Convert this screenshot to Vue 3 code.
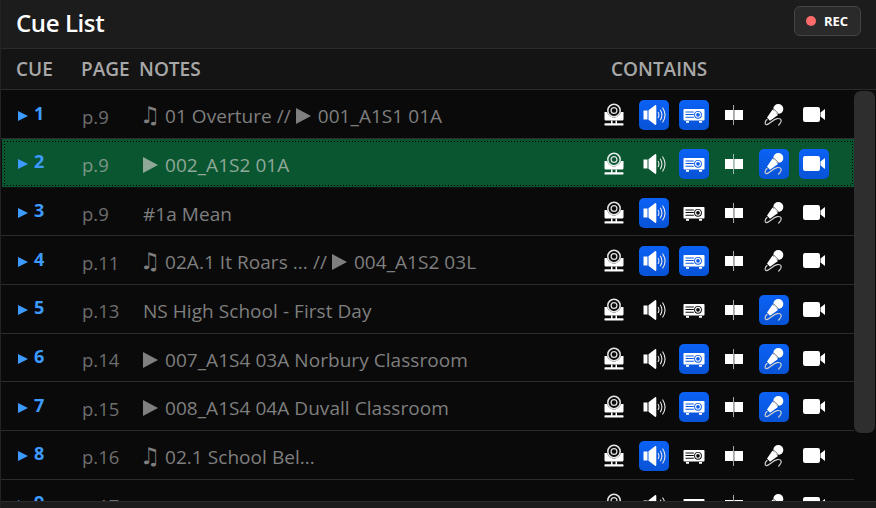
<script setup>
const cues = [
  { id: 1, page: 'p.9', parts: [['♫', '01 Overture // '], ['▶', '001_A1S1 01A']], on: ['speaker', 'projector'] },
  { id: 2, page: 'p.9', parts: [['▶', '002_A1S2 01A']], on: ['projector', 'mic', 'video'], selected: true },
  { id: 3, page: 'p.9', parts: [['', '#1a Mean']], on: ['speaker'] },
  { id: 4, page: 'p.11', parts: [['♫', '02A.1 It Roars ... // '], ['▶', '004_A1S2 03L']], on: ['speaker', 'projector'] },
  { id: 5, page: 'p.13', parts: [['', 'NS High School - First Day']], on: ['mic'] },
  { id: 6, page: 'p.14', parts: [['▶', '007_A1S4 03A Norbury Classroom']], on: ['projector', 'mic'] },
  { id: 7, page: 'p.15', parts: [['▶', '008_A1S4 04A Duvall Classroom']], on: ['projector', 'mic'] },
  { id: 8, page: 'p.16', parts: [['♫', '02.1 School Bel...']], on: ['speaker'] },
  { id: 9, page: 'p.17', parts: [['', '']], on: [] },
]
const icons = ['camera', 'speaker', 'projector', 'split', 'mic', 'video']
</script>

<template>
  <div class="panel">
    <svg class="defs" width="0" height="0">
      <symbol id="camera" viewBox="0 0 24 24">
        <circle cx="12" cy="7.500" r="6.200" fill="none" stroke="#fff" stroke-width="1.500" opacity=".9" />
        <circle cx="12" cy="7.500" r="2.900" fill="none" stroke="#ddd" stroke-width="1.300" />
        <path fill="#fff" d="M2.500 9h2.700c.8 3.200 3.600 5.500 6.800 5.500s6-2.300 6.800-5.500h2.700v7c0 .9-.7 1.600-1.600 1.600H4.100c-.9 0-1.600-.7-1.600-1.600z" />
        <path fill="#fff" d="M9 17.600h1.500v2.700H9zM13.500 17.600H15v2.700h-1.500zM3.300 20.300h17.400c.6 0 .9.400.9 1s-.3 1.300-.9 1.300H3.300c-.6 0-.9-.7-.9-1.300s.3-1 .9-1z" />
      </symbol>
      <symbol id="speaker" viewBox="0 0 24 24">
        <path fill="#fff" d="M1.500 7.500h4v9h-4zM6.500 7.300 13 2.300c.7-.5 1.300-.2 1.300.6v18.200c0 .8-.6 1.100-1.300.6l-6.500-5z" />
        <path fill="none" stroke="#e6e6e6" stroke-width="1.100" d="M16 9c1.200 1.900 1.200 4.100 0 6M18.200 6.800c2.200 3.300 2.200 7.100 0 10.400M20.500 4.500c3.200 4.700 3.200 10.300 0 15" />
      </symbol>
      <symbol id="projector" viewBox="0 0 24 24">
        <path fill="#fff" fill-rule="evenodd" d="M2.500 6h19c.6 0 1 .4 1 1v9.500c0 .6-.4 1-1 1h-19c-.6 0-1-.4-1-1V7c0-.6.4-1 1-1zm13.500 1.900a3.900 3.900 0 1 0 0 7.800 3.900 3.900 0 0 0 0-7.800zM3.500 8.500v1h8.300v-1zm0 2.600v1h8.300v-1zm0 2.600v1h8.300v-1z" />
        <circle cx="16" cy="11.800" r="2.400" fill="none" stroke="#fff" stroke-width="1.100" />
        <path fill="#fff" d="M4 18h3v1.700H4zM17 18h3v1.700h-3z" />
      </symbol>
      <symbol id="split" viewBox="0 0 24 24">
        <path fill="#fff" d="M3 7h8v10H3zM12.300 7H21v10h-8.700z" />
        <path fill="#d0d0d0" d="M11.200 2h.8v20h-.8z" />
      </symbol>
      <symbol id="mic" viewBox="0 0 24 24">
        <circle cx="16.300" cy="6" r="5" fill="#fff" />
        <path fill="#fff" d="M10.500 6.400 16 12 8 17.800 5 14.600z" />
        <path fill="none" stroke="#111" stroke-opacity=".6" stroke-width="1" d="M11.500 5.800 17 11.300" />
        <path fill="none" stroke="#cfcfcf" stroke-width="1.200" stroke-linecap="round" d="M5 16.500c-2 1.800-2.600 4.600-.8 5.100 3 .6 6.500-5.300 11-6 4-.6 5.800 2 1.500 6.400" />
      </symbol>
      <symbol id="video" viewBox="0 0 24 24">
        <rect x="1" y="4" width="17" height="15" rx="2.200" fill="#fff" />
        <path fill="#fff" d="M18.500 9.500 23 6v11l-4.500-3.500z" />
      </symbol>
    </svg>

    <header class="top-bar">
      <h1>Cue List</h1>
      <button class="rec-btn"><span class="rec-dot"></span>REC</button>
    </header>

    <div class="col-heads">
      <span class="h-cue">CUE</span>
      <span class="h-page">PAGE</span>
      <span class="h-notes">NOTES</span>
      <span class="h-contains">CONTAINS</span>
    </div>

    <div class="list-wrap">
      <div class="rows">
        <div v-for="cue in cues" :key="cue.id" class="row" :class="{ selected: cue.selected }">
          <div class="cue-cell"><span class="arrow"></span><span class="num">{{ cue.id }}</span></div>
          <div class="page-cell">{{ cue.page }}</div>
          <div class="notes-cell">
            <template v-for="(p, i) in cue.parts" :key="i">
              <span v-if="p[0] === '♫'" class="note-glyph">♫</span>
              <span v-else-if="p[0]" class="play-glyph"></span>
              <span class="note-text">{{ p[1] }}</span>
            </template>
          </div>
          <div class="icon-cell">
            <span v-for="ic in icons" :key="ic" class="ico" :class="{ on: cue.on.includes(ic) }">
              <svg :class="ic"><use :href="'#' + ic" /></svg>
            </span>
          </div>
        </div>
      </div>
      <div class="scroll-track"><div class="scroll-thumb"></div></div>
    </div>

    <div class="foot"></div>
  </div>
</template>

<style>
html, body { margin: 0; background: #0a0a0a; overflow: hidden; }
</style>

<style scoped>
.panel {
  width: 876px;
  height: 508px;
  display: flex;
  flex-direction: column;
  background: #0a0a0a;
  font-family: "Open Sans", "Noto Sans", "DejaVu Sans", sans-serif;
  overflow: hidden;
  box-sizing: border-box;
  border-left: 1px solid #222;
}
.defs { position: absolute; }

.top-bar {
  height: 49px;
  flex: none;
  box-sizing: border-box;
  background: #1c1c1c;
  border-bottom: 1px solid #2b2b2b;
  display: flex;
  align-items: center;
  justify-content: space-between;
  padding: 0 15px 6px 15px;
}
.top-bar h1 {
  margin: 3px 0 0;
  font-size: 24px;
  font-weight: 600;
  letter-spacing: -0.4px;
  color: #fff;
}
.rec-btn {
  width: 67px;
  height: 30px;
  box-sizing: border-box;
  background: #2a2a2a;
  border: 1px solid #444;
  border-radius: 6px;
  color: #fff;
  font: 700 13px "Open Sans", sans-serif;
  display: flex;
  align-items: center;
  padding: 0 0 0 11px;
  gap: 8px;
}
.rec-dot { width: 10px; height: 10px; border-radius: 50%; background: #ff6b6b; }

.col-heads {
  height: 41px;
  flex: none;
  box-sizing: border-box;
  background: #141414;
  border-bottom: 1px solid #2b2b2b;
  display: flex;
  align-items: center;
  color: #a8a8a8;
  font-size: 19px;
  font-weight: 600;
  padding-left: 15px;
}
.h-cue { width: 65px; }
.h-page { width: 58px; }
.h-notes { width: 472px; }

.list-wrap { flex: 1; display: flex; min-height: 0; overflow: hidden; }
.rows { width: 853px; flex: none; padding-top: 0.3px; }
.row {
  height: 48.7px;
  box-sizing: border-box;
  border-bottom: 1px solid #2b2b2b;
  display: flex;
  align-items: center;
}
.row.selected {
  background: #0a5630;
  margin-left: 1px;
  width: 852px;
  border-bottom-color: #111;
  position: relative;
}
/* dotted focus ring, spaced wider than the browser's own dotted outline */
.row.selected::after {
  content: "";
  position: absolute;
  inset: 2px 1px 1px 2px;
  pointer-events: none;
  background-image:
    linear-gradient(90deg, #000 1px, transparent 1px),
    linear-gradient(90deg, #000 1px, transparent 1px),
    linear-gradient(#000 1px, transparent 1px),
    linear-gradient(#000 1px, transparent 1px);
  background-size: 3px 1px, 3px 1px, 1px 3px, 1px 3px;
  background-position: 0 0, 0 100%, 0 0, 100% 0;
  background-repeat: repeat-x, repeat-x, repeat-y, repeat-y;
}
.cue-cell { width: 81px; padding-left: 17px; box-sizing: border-box; display: flex; align-items: center; gap: 6px; color: #3d9bff; font-size: 18px; font-weight: 700; }
.row.selected .cue-cell { width: 80px; padding-left: 16px; }
.arrow { width: 0; height: 0; margin-top: 3px; border-left: 10px solid #3d9bff; border-top: 5.500px solid transparent; border-bottom: 5.500px solid transparent; }
.num { margin-bottom: 3px; }
.page-cell { width: 61px; padding-top: 4px; color: #6e6e6e; font-size: 18.500px; }
.notes-cell { flex: 1; padding-top: 4px; color: #7f7f7f; font-size: 19px; letter-spacing: 0.05px; display: flex; align-items: center; white-space: pre; }
.row.selected .notes-cell { color: #8fa898; }
.row.selected .page-cell { color: #7d9586; }
.note-glyph { width: 25px; margin: -2px 0 0 -3px; font-family: "DejaVu Sans", sans-serif; font-size: 23px; line-height: 26px; }
.play-glyph { width: 0; height: 0; margin: 0 7px 0 0; border-left: 15px solid currentColor; border-top: 8px solid transparent; border-bottom: 8px solid transparent; }

.icon-cell { display: flex; gap: 10px; width: 230px; flex: none; box-sizing: border-box; margin: 2px 25px 0 0; }
.ico { width: 30px; height: 30px; border-radius: 5px; display: flex; align-items: center; justify-content: center; }
.ico.on { background: #0a5ae6; background-image: linear-gradient(#0b62f5, #0853d6); }
.ico svg { width: 24px; height: 24px; display: block; }

.scroll-track { flex: 1; }
.scroll-thumb { width: 21px; height: 342px; margin: 1px 0 0 0; background: #2e2e2e; border-radius: 7px; }

.foot { height: 7px; flex: none; background: #1c1c1c; border-top: 1px solid #2b2b2b; box-sizing: border-box; }
</style>
